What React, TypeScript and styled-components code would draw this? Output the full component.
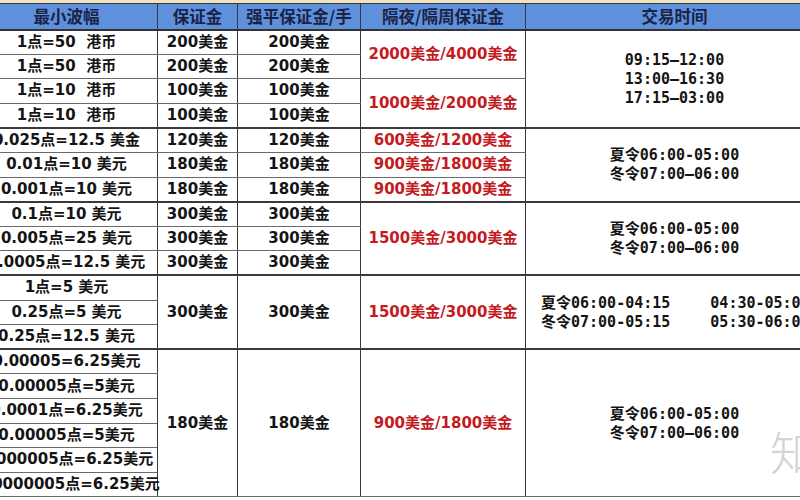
import React from "react";
import styled, {createGlobalStyle} from "styled-components";

const GlobalStyle = createGlobalStyle`
  html, body {
    margin: 0;
    padding: 0;
    background: #ffffff;
  }
`;

const Page = styled.div`
  position: relative;
  width: 800px;
  height: 500px;
  overflow: hidden;
  background: #fff;
  border-top: 3px solid #ebe4c4;
  box-sizing: border-box;
`;

const Table = styled.table`
  // the first column is cut off by the screenshot's left edge
  margin-left: -25px;
  width: 848px;
  border-collapse: collapse;
  table-layout: fixed;
  font-family: "DejaVu Sans", "Noto Sans CJK SC", sans-serif;
  font-weight: bold;
  font-size: 15px;
  color: #141414;
`;

const HeadRow = styled.tr`
  height: 26px;
`;

const HeadCell = styled.th`
  background: #5e90dc;
  color: #1a2247;
  font-family: "Noto Sans CJK SC", sans-serif;
  font-size: 16.5px;
  font-weight: bold;
  padding: 0;
  line-height: 1;
  border: 1px solid #3a3a3a;
  border-bottom: 2px solid #333;
`;

const Row = styled.tr<{ $group?: boolean }>`
  height: 24.6px;

  & > td {
    border-top: ${p => (p.$group ? "2px solid #3a3a3a" : "1px solid #6a6a6a")};
  }
`;

const Cell = styled.td<{ $tone?: "plain" | "red" | "time" }>`
  padding: 0;
  line-height: 1;
  text-align: center;
  vertical-align: middle;
  white-space: pre;
  border-left: 1px solid #3a3a3a;
  border-right: 1px solid #3a3a3a;
  border-bottom: 1px solid #6a6a6a;
  color: ${p => (p.$tone === "red" ? "#c41a22" : "#141414")};
  font-family: ${p =>
    p.$tone === "time"
      ? `"DejaVu Sans Mono", "Noto Sans CJK SC", monospace`
      : `"DejaVu Sans", "Noto Sans CJK SC", sans-serif`};
  font-weight: ${p => (p.$tone === "time" ? 600 : "bold")};
`;

const TimeLines = styled.div`
  display: flex;
  flex-direction: column;
  align-items: center;
  gap: 3px;
  line-height: 16px;
`;

const SplitTimes = styled.div`
  display: grid;
  grid-template-columns: auto auto;
  column-gap: 40px;
  row-gap: 3px;
  justify-content: start;
  padding-left: 15px;
  line-height: 16px;
  text-align: left;
`;

const Watermark = styled.div`
  position: absolute;
  left: 770px;
  top: 414px;
  font-family: "Noto Sans CJK SC", sans-serif;
  font-weight: 300;
  font-size: 46px;
  color: #d4d4d4;
  pointer-events: none;
`;

type CellDef = { text: React.ReactNode; span?: number; tone?: "plain" | "red" | "time" };
type RowDef = { group?: boolean; cells: CellDef[] };

const times = (lines: string[]) => (
  <TimeLines>
    {lines.map((l, i) => <span key={i}>{l}</span>)}
  </TimeLines>
);

const seasons = times(["夏令06:00-05:00", "冬令07:00—06:00"]);

const rows: RowDef[] = [
  {
    group: true, cells: [
      {text: "1点=50  港币"}, {text: "200美金"}, {text: "200美金"},
      {text: "2000美金/4000美金", span: 2, tone: "red"},
      {text: times(["09:15—12:00", "13:00—16:30", "17:15—03:00"]), span: 4, tone: "time"},
    ]
  },
  {cells: [{text: "1点=50  港币"}, {text: "200美金"}, {text: "200美金"}]},
  {
    cells: [
      {text: "1点=10  港币"}, {text: "100美金"}, {text: "100美金"},
      {text: "1000美金/2000美金", span: 2, tone: "red"},
    ]
  },
  {cells: [{text: "1点=10  港币"}, {text: "100美金"}, {text: "100美金"}]},
  {
    group: true, cells: [
      {text: "0.025点=12.5 美金"}, {text: "120美金"}, {text: "120美金"},
      {text: "600美金/1200美金", tone: "red"},
      {text: seasons, span: 3, tone: "time"},
    ]
  },
  {cells: [{text: "0.01点=10 美元"}, {text: "180美金"}, {text: "180美金"}, {text: "900美金/1800美金", tone: "red"}]},
  {cells: [{text: "0.001点=10 美元"}, {text: "180美金"}, {text: "180美金"}, {text: "900美金/1800美金", tone: "red"}]},
  {
    group: true, cells: [
      {text: "0.1点=10 美元"}, {text: "300美金"}, {text: "300美金"},
      {text: "1500美金/3000美金", span: 3, tone: "red"},
      {text: seasons, span: 3, tone: "time"},
    ]
  },
  {cells: [{text: "0.005点=25 美元"}, {text: "300美金"}, {text: "300美金"}]},
  {cells: [{text: "0.0005点=12.5 美元"}, {text: "300美金"}, {text: "300美金"}]},
  {
    group: true, cells: [
      {text: "1点=5 美元"}, {text: "300美金", span: 3}, {text: "300美金", span: 3},
      {text: "1500美金/3000美金", span: 3, tone: "red"},
      {
        text: (
          <SplitTimes>
            <span>夏令06:00-04:15</span>
            <span>04:30-05:00</span>
            <span>冬令07:00-05:15</span>
            <span>05:30-06:00</span>
          </SplitTimes>
        ), span: 3, tone: "time"
      },
    ]
  },
  {cells: [{text: "0.25点=5 美元"}]},
  {cells: [{text: "0.25点=12.5 美元"}]},
  {
    group: true, cells: [
      {text: "0.00005=6.25美元"}, {text: "180美金", span: 6}, {text: "180美金", span: 6},
      {text: "900美金/1800美金", span: 6, tone: "red"},
      {text: seasons, span: 6, tone: "time"},
    ]
  },
  {cells: [{text: "0.00005点=5美元"}]},
  {cells: [{text: "0.0001点=6.25美元"}]},
  {cells: [{text: "0.00005点=5美元"}]},
  {cells: [{text: "0.000005点=6.25美元"}]},
  {cells: [{text: "0.0000005点=6.25美元"}]},
];

const headers = ["最小波幅", "保证金", "强平保证金/手", "隔夜/隔周保证金", "交易时间"];
const widths = [182, 80, 123, 165, 298];

export default function App() {
  return (
    <>
      <GlobalStyle/>
      <Page>
        <Table>
          <colgroup>
            {widths.map((w, i) => <col key={i} style={{width: w}}/>)}
          </colgroup>
          <thead>
          <HeadRow>
            {headers.map(h => <HeadCell key={h}>{h}</HeadCell>)}
          </HeadRow>
          </thead>
          <tbody>
          {rows.map((row, i) => (
            <Row key={i} $group={row.group && i > 0}>
              {row.cells.map((c, j) => (
                <Cell key={j} rowSpan={c.span} $tone={c.tone}>{c.text}</Cell>
              ))}
            </Row>
          ))}
          </tbody>
        </Table>
        <Watermark>知</Watermark>
      </Page>
    </>
  );
}
